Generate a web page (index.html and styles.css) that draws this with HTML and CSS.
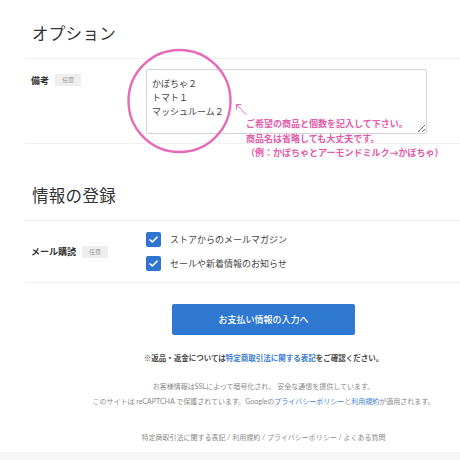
FILE: index.html
```html
<!DOCTYPE html>
<html lang="ja">
<head>
<meta charset="utf-8">
<title>オプション</title>
<link rel="stylesheet" href="styles.css">
</head>
<body>
<div class="page">
  <section class="section">
    <h2 class="section-title">オプション</h2>
    <div class="row row-note">
      <div class="label"><span class="label-text">備考</span><span class="badge">任意</span></div>
      <div class="field">
        <textarea class="note-input" readonly>かぼちゃ２
トマト１
マッシュルーム２</textarea>
      </div>
    </div>
  </section>

  <section class="section section-second">
    <h2 class="section-title">情報の登録</h2>
    <div class="row row-mail">
      <div class="label"><span class="label-text">メール購読</span><span class="badge">任意</span></div>
      <div class="field checks">
        <label class="check">
          <span class="box"><svg viewBox="0 0 15 15" width="15" height="15"><polyline points="4,7.8 6.4,10 11,5.2" fill="none" stroke="#fff" stroke-width="1.6" stroke-linecap="round" stroke-linejoin="round"/></svg></span>
          <span class="check-text">ストアからのメールマガジン</span>
        </label>
        <label class="check">
          <span class="box"><svg viewBox="0 0 15 15" width="15" height="15"><polyline points="4,7.8 6.4,10 11,5.2" fill="none" stroke="#fff" stroke-width="1.6" stroke-linecap="round" stroke-linejoin="round"/></svg></span>
          <span class="check-text">セールや新着情報のお知らせ</span>
        </label>
      </div>
    </div>
  </section>

  <div class="tail">
    <div class="actions">
      <button class="submit" type="button">お支払い情報の入力へ</button>
    </div>

    <p class="notice">※返品・返金については<a class="link" href="#">特定商取引法に関する表記</a>をご確認ください。</p>

    <div class="secure">
      <p>お客様情報はSSLによって暗号化され、 安全な通信を提供しています。</p>
      <p>このサイトは reCAPTCHA で保護されています。Googleの<a class="link" href="#">プライバシーポリシー</a>と<a class="link" href="#">利用規約</a>が適用されます。</p>
    </div>

    <nav class="footer-links">特定商取引法に関する表記 / 利用規約 / プライバシーポリシー / よくある質問</nav>
  </div>
</div>
<div class="footer-band"></div>

<div class="annotation">
  <svg class="annot-svg" width="460" height="460" viewBox="0 0 460 460">
    <circle cx="179.5" cy="101" r="51" fill="none" stroke="#e56ab8" stroke-width="2.4"/>
    <g stroke="#e56ab8" stroke-width="1" fill="none" stroke-linecap="round">
      <line x1="246" y1="114.5" x2="236.5" y2="104.5"/>
      <polyline points="236.5,109 236.5,104.5 241,104.5"/>
    </g>
  </svg>
  <div class="annot-text">
    <div>ご希望の商品と個数を記入して下さい。</div>
    <div>商品名は省略しても大丈夫です。</div>
    <div>（例：かぼちゃとアーモンドミルク→かぼちゃ）</div>
  </div>
</div>
</body>
</html>
```
FILE: styles.css
```css
html, body {
  margin: 0;
  padding: 0;
  background: #ffffff;
  overflow: hidden;
}

body {
  width: 460px;
  height: 460px;
  position: relative;
  font-family: Lato, "Noto Sans CJK JP", "Noto Sans", sans-serif;
  color: #333333;
}

.page {
  margin-left: 25px;
  width: 435px;
}

.section-title {
  margin: 0;
  padding: 24px 7px 14px;
  font-size: 16.5px;
  line-height: 20px;
  font-weight: normal;
  color: #333333;
  letter-spacing: 0.3px;
}

.section-second {
  margin-top: 18px;
}

.row {
  display: flex;
  border-top: 1px solid #f0f0f0;
  border-bottom: 1px solid #f0f0f0;
}

.row-note {
  padding: 10px 0 9px;
}

.row-mail {
  padding: 11px 0 11px;
  align-items: center;
}

.label {
  width: 115px;
  padding-left: 6px;
  display: flex;
  align-items: center;
  height: 20px;
}

.row-note .label {
  margin-top: 1px;
}

.label-text {
  font-size: 9px;
  font-weight: bold;
  color: #333333;
}

.badge {
  display: inline-block;
  margin-left: 6px;
  width: 26px;
  height: 12px;
  line-height: 12px;
  text-align: center;
  background: #eeeeee;
  color: #999999;
  font-size: 6px;
  border-radius: 1px;
}

.field {
  flex: 1;
}

.note-input {
  display: block;
  box-sizing: border-box;
  width: 281px;
  height: 65px;
  margin: 0;
  padding: 7px 5px 5px;
  border: 1px solid #d4d4d4;
  border-radius: 2px;
  font-family: Lato, "Noto Sans CJK JP", sans-serif;
  font-size: 9px;
  line-height: 14px;
  color: #444444;
  background: #ffffff;
  outline: none;
  resize: vertical;
}

.checks {
  display: flex;
  flex-direction: column;
  gap: 9px;
}

.check {
  display: flex;
  align-items: center;
  height: 15px;
}

.box {
  width: 15px;
  height: 15px;
  background: #2f74d0;
  border-radius: 2px;
  display: block;
}

.box svg {
  display: block;
}

.check-text {
  margin-left: 9px;
  font-size: 9px;
  color: #444444;
}

.tail {
  padding-left: 42px;
}

.actions {
  display: flex;
  justify-content: center;
  margin-top: 21px;
}

.submit {
  width: 183px;
  height: 31px;
  border: none;
  border-radius: 2px;
  background: #2f78d2;
  color: #ffffff;
  font-family: Lato, "Noto Sans CJK JP", sans-serif;
  font-size: 9px;
  font-weight: 500;
  padding: 0;
}

.notice {
  margin: 18px 0 0;
  text-align: center;
  font-size: 7.5px;
  line-height: 12px;
  font-weight: bold;
  color: #4a4a4a;
  white-space: nowrap;
}

.link {
  color: #3b7dd4;
  text-decoration: none;
}

.secure {
  margin-top: 14px;
  text-align: center;
  font-size: 7px;
  line-height: 15px;
  color: #8a8a8a;
  white-space: nowrap;
}

.secure p {
  margin: 0;
}

.footer-links {
  margin-top: 22px;
  text-align: center;
  font-size: 7px;
  line-height: 12px;
  color: #8a8a8a;
  white-space: nowrap;
}

.footer-band {
  position: absolute;
  left: 0;
  right: 0;
  top: 452px;
  height: 8px;
  background: #f6f6f6;
}

.annotation {
  position: absolute;
  left: 0;
  top: 0;
  width: 460px;
  height: 460px;
  pointer-events: none;
}

.annot-svg {
  position: absolute;
  left: 0;
  top: 0;
}

.annot-text {
  position: absolute;
  left: 246px;
  top: 117px;
  font-size: 9px;
  line-height: 14.5px;
  font-weight: bold;
  color: #e35aab;
  white-space: nowrap;
}
```
